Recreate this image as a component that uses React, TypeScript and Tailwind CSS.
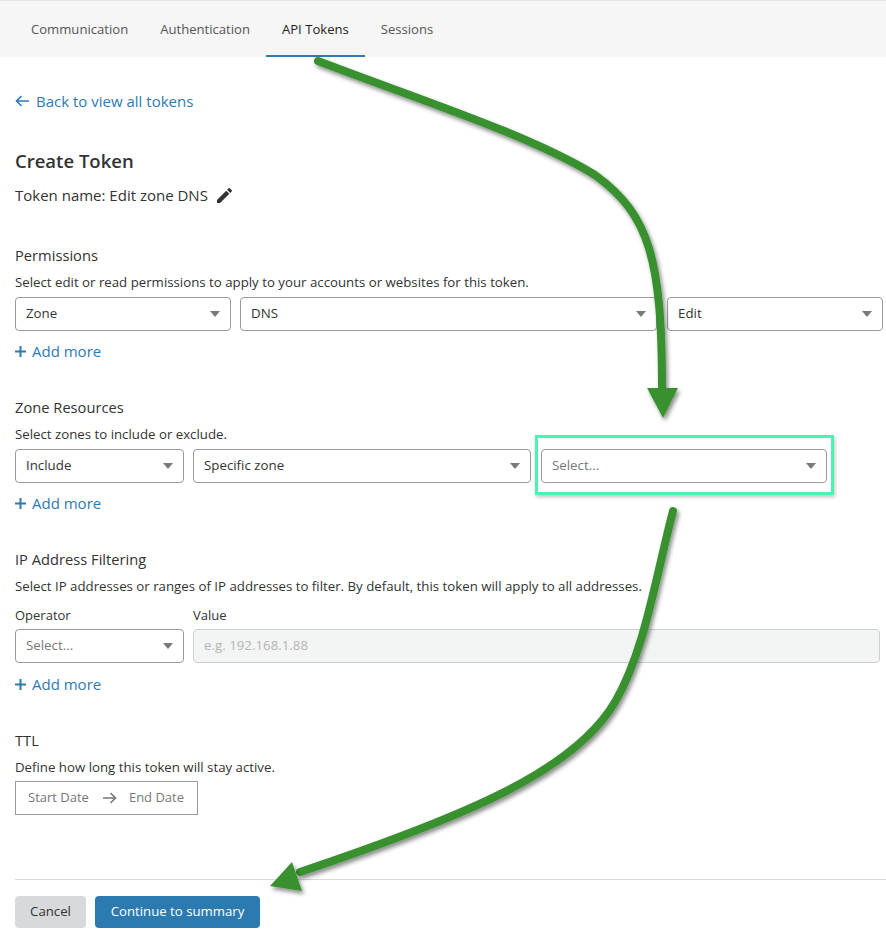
import React from 'react';

const font = { fontFamily: '"Open Sans", "Noto Sans", sans-serif' };

function Caret() {
  return (
    <svg width="10" height="6" viewBox="0 0 10 6" className="shrink-0">
      <path d="M0 0h10L5 6z" fill="#7a7a7a" />
    </svg>
  );
}

function Select({
  value,
  placeholder = false,
  className = '',
}: {
  value: string;
  placeholder?: boolean;
  className?: string;
}) {
  return (
    <div
      className={`h-[34px] flex items-center justify-between pl-[10px] pr-[10px] border border-[#9a9a9a] rounded-[4px] bg-white text-[13.3px] ${
        placeholder ? 'text-[#777]' : 'text-[#333]'
      } ${className}`}
    >
      <span>{value}</span>
      <Caret />
    </div>
  );
}

function AddMore() {
  return (
    <div className="flex items-center gap-[6px] h-[20px] text-[15px] text-[#2e7ab3]">
      <svg width="11" height="11" viewBox="0 0 11 11">
        <path d="M5.5 0v11M0 5.5h11" stroke="#2e7ab3" strokeWidth="2" />
      </svg>
      <span>Add more</span>
    </div>
  );
}

function SectionTitle({ children }: { children: React.ReactNode }) {
  return <div className="h-[20px] leading-[20px] text-[14.7px] text-[#333]">{children}</div>;
}

function Desc({ children }: { children: React.ReactNode }) {
  return <div className="mt-[8px] h-[18px] leading-[18px] text-[13.25px] text-[#333]">{children}</div>;
}

export default function App() {
  const tabs = ['Communication', 'Authentication', 'API Tokens', 'Sessions'];

  return (
    <div className="relative w-[886px] h-[938px] bg-white overflow-hidden" style={font}>
      {/* tabs */}
      <div className="h-[57px] bg-[#f6f6f6] border-t border-[#e4e4e4] flex pl-[15px]">
        {tabs.map((t) => (
          <div
            key={t}
            className={`px-4 pt-[3px] flex items-center text-[13.1px] ${
              t === 'API Tokens'
                ? 'text-[#222] border-b-[2px] border-[#2e7ab3]'
                : 'text-[#555] border-b-[2px] border-transparent'
            }`}
          >
            {t}
          </div>
        ))}
      </div>

      <div className="pl-[15px] pr-[3px]">
        <div className="mt-[34px] flex items-center gap-[6px] h-[20px] text-[15px] text-[#2e7ab3]">
          <svg width="15" height="12" viewBox="0 0 15 12">
            <path d="M14 6H1.5M6.5 1L1.5 6l5 5" stroke="#2e7ab3" strokeWidth="1.6" fill="none" />
          </svg>
          <span>Back to view all tokens</span>
        </div>

        <div className="mt-[38px] h-[24px] leading-[24px] text-[18.5px] font-semibold text-[#333]">
          Create Token
        </div>
        <div className="mt-[12px] h-[20px] flex items-center gap-[9px] text-[15px] text-[#333]">
          <span>Token name: Edit zone DNS</span>
          <svg width="15" height="15" viewBox="3 3 18 18">
            <path
              d="M3 17.25V21h3.75L17.81 9.94l-3.75-3.75L3 17.25zM20.71 7.04a1 1 0 0 0 0-1.41l-2.34-2.34a1 1 0 0 0-1.41 0l-1.83 1.83 3.75 3.75 1.83-1.83z"
              fill="#333"
            />
          </svg>
        </div>

        {/* Permissions */}
        <div className="mt-[40px]">
          <SectionTitle>Permissions</SectionTitle>
          <Desc>Select edit or read permissions to apply to your accounts or websites for this token.</Desc>
          <div className="mt-[6px] flex gap-[9px]">
            <Select value="Zone" className="w-[216px]" />
            <Select value="DNS" className="w-[417px]" />
            <Select value="Edit" className="w-[216px] ml-[1px]" />
          </div>
          <div className="mt-[10px]">
            <AddMore />
          </div>
        </div>

        {/* Zone Resources */}
        <div className="mt-[36px]">
          <SectionTitle>Zone Resources</SectionTitle>
          <Desc>Select zones to include or exclude.</Desc>
          <div className="mt-[6px] flex gap-[9px]">
            <Select value="Include" className="w-[169px]" />
            <Select value="Specific zone" className="w-[338px]" />
            <div className="relative w-[286px] ml-[1px]">
              <Select value="Select..." placeholder />
              <div className="absolute top-[-14px] left-[-6px] right-[-7px] bottom-[-12px] border-[3px] border-[#4cf2b2] shadow-[1px_2px_4px_rgba(0,0,0,0.25)] pointer-events-none" />
            </div>
          </div>
          <div className="mt-[10px]">
            <AddMore />
          </div>
        </div>

        {/* IP filtering */}
        <div className="mt-[36px]">
          <SectionTitle>IP Address Filtering</SectionTitle>
          <Desc>
            Select IP addresses or ranges of IP addresses to filter. By default, this token will apply to all
            addresses.
          </Desc>
          <div className="mt-[11px] flex gap-[9px] h-[18px] leading-[18px] text-[13px] text-[#333]">
            <div className="w-[169px]">Operator</div>
            <div>Value</div>
          </div>
          <div className="mt-[5px] flex gap-[9px]">
            <Select value="Select..." placeholder className="w-[169px]" />
            <div className="w-[687px] h-[34px] flex items-center px-[10px] border border-[#cfcfcf] rounded-[4px] bg-[#f3f4f4] text-[13.3px] text-[#b5b5b5]">
              e.g. 192.168.1.88
            </div>
          </div>
          <div className="mt-[11px]">
            <AddMore />
          </div>
        </div>

        {/* TTL */}
        <div className="mt-[36px]">
          <SectionTitle>TTL</SectionTitle>
          <Desc>Define how long this token will stay active.</Desc>
          <div className="mt-[5px] w-[183px] h-[34px] flex items-center pl-[12px] border border-[#9a9a9a] text-[13px] text-[#777]">
            <span>Start Date</span>
            <svg width="15" height="12" viewBox="0 0 15 12" className="ml-[13px] mr-[12px]">
              <path d="M1 6h12.5M8.5 1l5 5-5 5" stroke="#777" strokeWidth="1.6" fill="none" />
            </svg>
            <span>End Date</span>
          </div>
        </div>
      </div>

      <div className="mt-[64px] ml-[15px] border-t border-[#d9d9d9]" />

      <div className="mt-[16px] pl-[15px] flex gap-[9px] text-[13.2px]">
        <button className="h-[32px] w-[71px] rounded-[4px] bg-[#d8d9db] text-[#333]">Cancel</button>
        <button className="h-[32px] w-[165px] rounded-[4px] bg-[#2c7bb0] text-white">Continue to summary</button>
      </div>

      {/* annotation arrows */}
      <svg className="absolute inset-0 pointer-events-none" width="886" height="938" viewBox="0 0 886 938">
        <defs>
          <filter id="sh" x="-20%" y="-20%" width="140%" height="140%">
            <feDropShadow dx="2" dy="3" stdDeviation="2" floodColor="#000" floodOpacity="0.45" />
          </filter>
        </defs>
        <g filter="url(#sh)" stroke="#39912f" strokeWidth="8" strokeLinecap="round" fill="none">
          <path d="M318 61 C 420 100, 530 135, 595 175 C 650 215, 662 260, 662 390" />
          <path d="M673 511 C 655 580, 645 650, 615 702 C 575 770, 470 815, 300 872" />
        </g>
        <g filter="url(#sh)" fill="#39912f">
          <path d="M647 388 L678 388 L663 418 Z" />
          <path d="M270 886 L292 862 L302 891 Z" />
        </g>
      </svg>
    </div>
  );
}
